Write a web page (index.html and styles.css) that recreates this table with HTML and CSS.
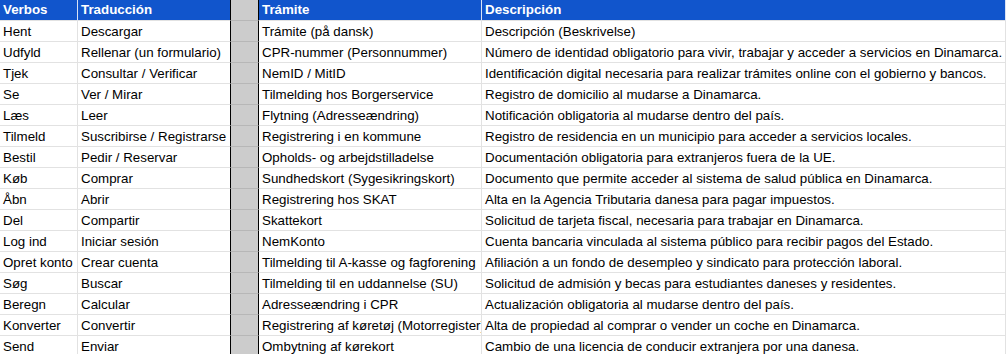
FILE: index.html
```html
<!DOCTYPE html>
<html lang="es">
<head>
<meta charset="utf-8">
<title>Verbos y trámites</title>
<link rel="stylesheet" href="styles.css">
</head>
<body>
<div class="sheet">
  <div class="c h">Verbos</div><div class="c h b">Traducción</div><div class="c g"></div><div class="c h">Trámite</div><div class="c h">Descripción</div>
  <div class="c">Hent</div><div class="c b">Descargar</div><div class="c g"></div><div class="c">Trámite (på dansk)</div><div class="c">Descripción (Beskrivelse)</div>
  <div class="c">Udfyld</div><div class="c b">Rellenar (un formulario)</div><div class="c g"></div><div class="c">CPR-nummer (Personnummer)</div><div class="c">Número de identidad obligatorio para vivir, trabajar y acceder a servicios en Dinamarca.</div>
  <div class="c">Tjek</div><div class="c b">Consultar / Verificar</div><div class="c g"></div><div class="c">NemID / MitID</div><div class="c">Identificación digital necesaria para realizar trámites online con el gobierno y bancos.</div>
  <div class="c">Se</div><div class="c b">Ver / Mirar</div><div class="c g"></div><div class="c">Tilmelding hos Borgerservice</div><div class="c">Registro de domicilio al mudarse a Dinamarca.</div>
  <div class="c">Læs</div><div class="c b">Leer</div><div class="c g"></div><div class="c">Flytning (Adresseændring)</div><div class="c">Notificación obligatoria al mudarse dentro del país.</div>
  <div class="c">Tilmeld</div><div class="c b">Suscribirse / Registrarse</div><div class="c g"></div><div class="c">Registrering i en kommune</div><div class="c">Registro de residencia en un municipio para acceder a servicios locales.</div>
  <div class="c">Bestil</div><div class="c b">Pedir / Reservar</div><div class="c g"></div><div class="c">Opholds- og arbejdstilladelse</div><div class="c">Documentación obligatoria para extranjeros fuera de la UE.</div>
  <div class="c">Køb</div><div class="c b">Comprar</div><div class="c g"></div><div class="c">Sundhedskort (Sygesikringskort)</div><div class="c">Documento que permite acceder al sistema de salud pública en Dinamarca.</div>
  <div class="c">Åbn</div><div class="c b">Abrir</div><div class="c g"></div><div class="c">Registrering hos SKAT</div><div class="c">Alta en la Agencia Tributaria danesa para pagar impuestos.</div>
  <div class="c">Del</div><div class="c b">Compartir</div><div class="c g"></div><div class="c">Skattekort</div><div class="c">Solicitud de tarjeta fiscal, necesaria para trabajar en Dinamarca.</div>
  <div class="c">Log ind</div><div class="c b">Iniciar sesión</div><div class="c g"></div><div class="c">NemKonto</div><div class="c">Cuenta bancaria vinculada al sistema público para recibir pagos del Estado.</div>
  <div class="c">Opret konto</div><div class="c b">Crear cuenta</div><div class="c g"></div><div class="c">Tilmelding til A-kasse og fagforening</div><div class="c">Afiliación a un fondo de desempleo y sindicato para protección laboral.</div>
  <div class="c">Søg</div><div class="c b">Buscar</div><div class="c g"></div><div class="c">Tilmelding til en uddannelse (SU)</div><div class="c">Solicitud de admisión y becas para estudiantes daneses y residentes.</div>
  <div class="c">Beregn</div><div class="c b">Calcular</div><div class="c g"></div><div class="c">Adresseændring i CPR</div><div class="c">Actualización obligatoria al mudarse dentro del país.</div>
  <div class="c">Konverter</div><div class="c b">Convertir</div><div class="c g"></div><div class="c">Registrering af køretøj (Motorregister)</div><div class="c">Alta de propiedad al comprar o vender un coche en Dinamarca.</div>
  <div class="c">Send</div><div class="c b">Enviar</div><div class="c g"></div><div class="c">Ombytning af kørekort</div><div class="c">Cambio de una licencia de conducir extranjera por una danesa.</div>
</div>
</body>
</html>
```
FILE: styles.css
```css
html, body {
  margin: 0;
  padding: 0;
  background: #ffffff;
}
body {
  font-family: "Liberation Sans", Arial, sans-serif;
  font-size: 13.33px;
  color: #000000;
  overflow: hidden;
}
.sheet {
  display: grid;
  grid-template-columns: 78px 153px 28px 223px 1fr;
  grid-auto-rows: 21px;
}
.c {
  box-sizing: border-box;
  border-right: 1px solid #e2e2e2;
  border-bottom: 1px solid #e2e2e2;
  padding: 1px 3px 0 3px;
  line-height: 19px;
  white-space: nowrap;
  overflow: hidden;
}
.c.h {
  background: #1155cc;
  color: #ffffff;
  font-weight: bold;
  padding-top: 0;
  line-height: 20px;
  border-right-color: #d9e2f5;
}
.c.b {
  border-right-color: #000000;
}
.c.g {
  background: #cccccc;
  border-right: 1px solid #000000;
  border-bottom-color: #b7b7b7;
  padding: 0;
}
```
